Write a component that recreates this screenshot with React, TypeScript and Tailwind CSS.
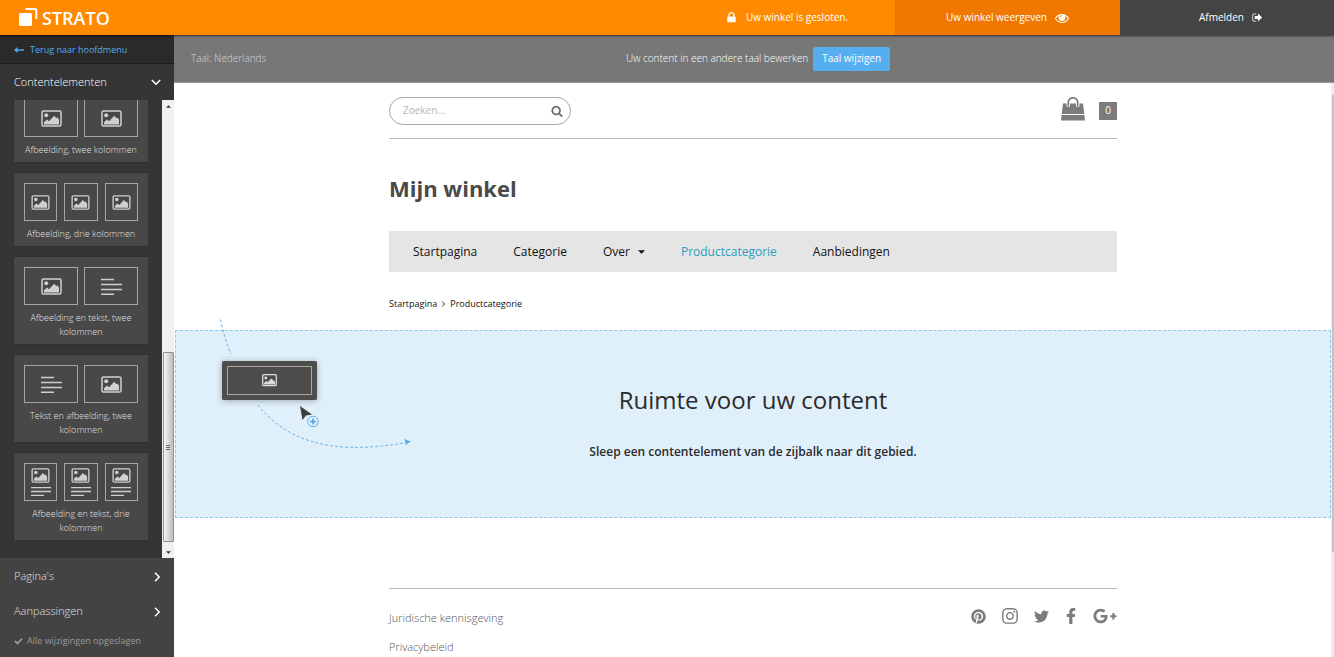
import React from 'react';
import { FaFacebookF, FaGooglePlusG, FaInstagram, FaPinterest, FaTwitter } from 'react-icons/fa';

type Block = 'image' | 'text' | 'imageText';

const elements: { label: string; blocks: Block[] }[] = [
  { label: 'Afbeelding, twee kolommen', blocks: ['image', 'image'] },
  { label: 'Afbeelding, drie kolommen', blocks: ['image', 'image', 'image'] },
  { label: 'Afbeelding en tekst, twee kolommen', blocks: ['image', 'text'] },
  { label: 'Tekst en afbeelding, twee kolommen', blocks: ['text', 'image'] },
  { label: 'Afbeelding en tekst, drie kolommen', blocks: ['imageText', 'imageText', 'imageText'] },
];

const socials = [
  { name: 'Pinterest', Icon: FaPinterest, className: 'size-[15px]' },
  { name: 'Instagram', Icon: FaInstagram, className: 'size-[18px]' },
  { name: 'Twitter', Icon: FaTwitter, className: 'size-[15px]' },
  { name: 'Facebook', Icon: FaFacebookF, className: 'h-4 w-[14px]' },
  { name: 'Google Plus', Icon: FaGooglePlusG, className: 'size-6' },
];

const LOCK =
  'M640 768h512v-192q0-106-75-181t-181-75-181 75-75 181v192zm832 96v576q0 40-28 68t-68 28h-960q-40 0-68-28t-28-68v-576q0-40 28-68t68-28h32v-192q0-184 132-316t316-132 316 132 132 316v192h32q40 0 68 28t28 68z';
const EYE =
  'M1664 960q-152-236-381-353 61 104 61 225 0 185-131.5 316.5t-316.5 131.5-316.5-131.5-131.5-316.5q0-121 61-225-229 117-381 353 133 205 333.5 326.5t434.5 121.5 434.5-121.5 333.5-326.5zm-720-384q0-20-14-34t-34-14q-125 0-214.5 89.5t-89.5 214.5q0 20 14 34t34 14 34-14 14-34q0-86 61-147t147-61q20 0 34-14t14-34zm848 384q0 34-20 69-140 230-376.5 368.5t-499.5 138.5-499.5-139-376.5-368q-20-35-20-69t20-69q140-229 376.5-368t499.5-139 499.5 139 376.5 368q20 35 20 69z';
const SIGN_OUT =
  'M704 1440q0 4 1 20t.5 26.5-3 23.5-10 19.5-20.5 6.5h-320q-119 0-203.5-84.5t-84.5-203.5v-704q0-119 84.5-203.5t203.5-84.5h320q13 0 22.5 9.5t9.5 22.5q0 4 1 20t.5 26.5-3 23.5-10 19.5-20.5 6.5h-320q-66 0-113 47t-47 113v704q0 66 47 113t113 47h312l11.5 1 11.5 3 8 5.5 7 9 2 13.5zm928-544q0 26-19 45l-544 544q-19 19-45 19t-45-19-19-45v-288h-448q-26 0-45-19t-19-45v-384q0-26 19-45t45-19h448v-288q0-26 19-45t45-19 45 19l544 544q19 19 19 45z';
const SEARCH =
  'M1216 832q0-185-131.5-316.5t-316.5-131.5-316.5 131.5-131.5 316.5 131.5 316.5 316.5 131.5 316.5-131.5 131.5-316.5zm512 832q0 52-38 90t-90 38q-54 0-90-38l-343-342q-179 124-399 124-143 0-273.5-55.5t-225-150-150-225-55.5-273.5 55.5-273.5 150-225 225-150 273.5-55.5 273.5 55.5 225 150 150 225 55.5 273.5q0 220-124 399l343 343q37 37 37 90z';

function Glyph({ d, className }: { d: string; className: string }) {
  return (
    <svg viewBox="0 0 1792 1792" className={className} fill="currentColor" aria-hidden="true">
      <path d={d} />
    </svg>
  );
}

function ImageIcon({ className }: { className: string }) {
  return (
    <svg viewBox="0 0 21 17" className={className} aria-hidden="true">
      <rect x="1" y="1" width="19" height="15" rx="1.5" fill="none" stroke="#d0d0d0" strokeWidth="1.5" />
      <circle cx="5.2" cy="5.2" r="2" fill="#d0d0d0" />
      <path d="M3 14.500v-2.300l3-2.600 2 1.600 5.200-5.400 2 2.200 1-.6L18 9.600v4.900z" fill="#d0d0d0" />
    </svg>
  );
}

function TextIcon() {
  return (
    <svg viewBox="0 0 21 17" className="h-[17px] w-[21px]" aria-hidden="true">
      <path d="M0 1.500h13M0 6.500h21M0 11.500h21M0 16.200h13" stroke="#cfcfcf" strokeWidth="1.600" />
    </svg>
  );
}

function BlockPreview({ block, small }: { block: Block; small: boolean }) {
  return (
    <span className="flex h-[38px] flex-1 flex-col items-center justify-center gap-1 border border-[#a6a6a6]">
      {block === 'text' ? <TextIcon /> : <ImageIcon className={small ? 'h-[15px] w-[19px]' : 'h-[17px] w-[21px]'} />}
      {block === 'imageText' && (
        <svg viewBox="0 0 20 9" className="h-[9px] w-5" aria-hidden="true">
          <path d="M0 .7h20M0 4.500h20M0 8.300h13" stroke="#cfcfcf" strokeWidth="1.300" />
        </svg>
      )}
    </span>
  );
}

function Chevron({ className }: { className: string }) {
  return (
    <svg viewBox="0 0 10 10" className={`size-[10px] ${className}`} fill="none" stroke="currentColor" strokeWidth="1.5" aria-hidden="true">
      <path d="M3 .8 7.200 5 3 9.200" />
    </svg>
  );
}

function Header() {
  return (
    <header className="z-10 flex h-[35px] shrink-0 bg-[#ff8a00] text-[10px] text-white shadow-[0_1px_2px_rgba(0,0,0,0.6)]">
      <a href="#" className="flex items-center gap-1 pl-[18px]">
        <svg viewBox="0 0 20 20" className="mb-[2px] size-5" aria-hidden="true">
          <rect x="1" y="6" width="13" height="13" rx="1.5" fill="#fff" />
          <path d="M7.500 2h9a1.800 1.800 0 0 1 1.800 1.800V12" fill="none" stroke="#fff" strokeWidth="2" />
        </svg>
        <span className="text-[18px] leading-5 font-semibold">STRATO</span>
      </a>
      <div className="ml-auto flex w-[217px] items-center justify-center gap-2">
        <Glyph d={LOCK} className="size-[13px]" />
        <span>Uw winkel is gesloten.</span>
      </div>
      <a href="#" className="flex w-[225px] items-center justify-center gap-2 bg-[#f07800]">
        Uw winkel weergeven
        <Glyph d={EYE} className="size-[14px]" />
      </a>
      <a href="#" className="flex w-[214px] items-center justify-center gap-2 bg-[#444] pl-2">
        Afmelden
        <Glyph d={SIGN_OUT} className="size-[11px]" />
      </a>
    </header>
  );
}

function Sidebar() {
  return (
    <aside className="flex w-[174px] shrink-0 flex-col bg-[#353535] font-light text-[#e0e0e0]">
      <a href="#" className="flex h-[29px] shrink-0 items-center gap-[6px] border-b border-[#1c1c1c] bg-[#2a2a2a] pt-[2px] pl-[14px] text-[9px] font-normal text-[#51aced]">
        <svg viewBox="0 0 10 6" className="h-[6px] w-[10px]" aria-hidden="true">
          <path d="M3.500 0v2.200H10v1.600H3.500V6L0 3z" fill="currentColor" />
        </svg>
        Terug naar hoofdmenu
      </a>
      <button type="button" className="flex h-9 shrink-0 items-center justify-between pr-[13px] pl-[14px] text-[11px] text-white">
        Contentelementen
        <Chevron className="rotate-90" />
      </button>
      <div className="flex min-h-0 flex-1 justify-between">
        <ul className="flex flex-col justify-end gap-[11px] overflow-hidden pb-[18px] pl-[14px]">
          {elements.map((el) => (
            <li key={el.label} className="w-[134px] shrink-0 rounded-[1px] bg-[#484848] px-[9px] pt-[10px] pb-[5px] shadow-[0_0_2px_rgba(0,0,0,0.3)]">
              <div className={el.blocks.length === 3 ? 'flex gap-[7px] px-px' : 'flex gap-[6px] px-px'}>
                {el.blocks.map((block, i) => (
                  <BlockPreview key={i} block={block} small={el.blocks.length === 3} />
                ))}
              </div>
              <p className="mt-[6px] text-center text-[9px] leading-[14px]">{el.label}</p>
            </li>
          ))}
        </ul>
        <div className="flex w-3 flex-col items-center bg-[#f0f0f0] pt-[5px] pb-1">
          <svg viewBox="0 0 6 3" className="h-[3px] w-[5px]"><path d="M0 3 3 0l3 3z" fill="#333" /></svg>
          <div className="flex-1" />
          <div className="flex h-[190px] w-[11px] flex-col items-center justify-center gap-px rounded-[1px] border border-[#8f8f8f] bg-linear-to-r from-[#f5f5f5] to-[#bdbdbd]">
            <span className="h-px w-1 bg-[#666]" />
            <span className="h-px w-1 bg-[#666]" />
            <span className="h-px w-1 bg-[#666]" />
          </div>
          <svg viewBox="0 0 6 3" className="mt-[9px] h-[3px] w-[5px]"><path d="M0 0l3 3 3-3z" fill="#333" /></svg>
        </div>
      </div>
      <nav className="shrink-0 bg-[#434343] pt-px pb-1 text-[11px]">
        {['Pagina\'s', 'Aanpassingen'].map((item) => (
          <button key={item} type="button" className="flex h-[35px] w-full items-center justify-between pr-[12px] pl-[14px]">
            {item}
            <Chevron className="text-white" />
          </button>
        ))}
        <p className="flex h-6 items-center gap-1 pl-[14px] text-[9px] font-medium text-[#9a9a9a]">
          <svg viewBox="0 0 10 8" className="h-2 w-[9px]" aria-hidden="true">
            <path d="M1 4l2.800 2.800L9 1.400" fill="none" stroke="currentColor" strokeWidth="2" />
          </svg>
          Alle wijzigingen opgeslagen
        </p>
      </nav>
    </aside>
  );
}

// Shows how a content element is dragged into the drop zone
function DragHint() {
  return (
    <svg viewBox="0 0 200 135" className="absolute -top-[13px] left-[39px] h-[135px] w-[200px] overflow-visible" aria-hidden="true">
      <g fill="none" stroke="#6fb4ea" strokeDasharray="3 2">
        <path d="M5.500 1.500C8 13 11 25 16 36" />
        <path d="M43 87C70 121 112 138 189 125" />
      </g>
      <path d="M196 123.500l-7-2.500 1.500 3-.5 3z" fill="#5aaae8" />
      <rect x="7" y="43" width="95" height="39" rx="1.500" fill="#4d4d4b" className="drop-shadow-[0_1px_3px_rgba(0,0,0,0.3)]" />
      <rect x="12.500" y="48.500" width="84" height="28" fill="none" stroke="#a8a8a8" />
      <rect x="47.700" y="56.700" width="13.600" height="11" rx="1" fill="none" stroke="#dcdcdc" strokeWidth="1.300" />
      <circle cx="50.800" cy="60" r="1.400" fill="#dcdcdc" />
      <path d="M49 66.500v-1.500l2.500-2 1.500 1 3.300-3.600 3.700 3.300v2.800z" fill="#dcdcdc" />
      <path d="M85 88l12 8.500-6 1-3.500 4.500z" fill="#3e3e3e" />
      <circle cx="98" cy="103.500" r="5.300" fill="#e1f0fb" stroke="#62aeea" />
      <path d="M98 100.500v6M95 103.500h6" stroke="#4da2e6" strokeWidth="1.500" />
    </svg>
  );
}

function Shop() {
  return (
    <div className="min-w-0 flex-1 overflow-hidden">
      <div className="mx-auto max-w-[728px]">
        <div className="flex h-14 items-center justify-between border-b border-[#b8b8b8]">
          <form className="flex h-7 w-[182px] items-center rounded-full border border-[#a8a8a8] pr-[7px] pl-[13px]">
            <input type="search" aria-label="Zoeken" placeholder="Zoeken..." className="min-w-0 flex-1 text-[10px] outline-none placeholder:text-[#b5b5b5]" />
            <button type="submit" aria-label="Zoek" className="text-[#6b6b6b]">
              <Glyph d={SEARCH} className="size-[12px]" />
            </button>
          </form>
          <a href="#" aria-label="Winkelmandje" className="flex items-center gap-[14px]">
            <svg viewBox="0 0 24 24" className="mb-1 size-6" aria-hidden="true">
              <path d="M2 6.500h20l1.300 10.500H.7z M.6 18h22.800l.6 5.500H0z" fill="#7b7b7b" />
              <path d="M7.300 9.500V5.500a4.700 4.700 0 0 1 9.400 0v4" fill="none" stroke="#fff" strokeWidth="3.600" />
              <path d="M7.300 9V5.500a4.700 4.700 0 0 1 9.400 0V9" fill="none" stroke="#7b7b7b" strokeWidth="1.700" />
            </svg>
            <span className="flex size-[18px] items-center justify-center bg-[#7b7b7b] text-[10px] text-white">0</span>
          </a>
        </div>
        <h1 className="mt-[33px] text-[22px] leading-8 font-bold text-[#4a4a4a]">Mijn winkel</h1>
        <nav className="mt-[27px] flex h-[41px] items-center gap-9 bg-[#e5e5e5] px-6 text-[12px] text-[#111]">
          <a href="#">Startpagina</a>
          <a href="#">Categorie</a>
          <a href="#" className="flex items-center gap-2">
            Over
            <svg viewBox="0 0 8 4" className="h-1 w-[7px]" aria-hidden="true"><path d="M0 0h8L4 4z" fill="currentColor" /></svg>
          </a>
          <a href="#" className="text-[#2b9dbf]">Productcategorie</a>
          <a href="#">Aanbiedingen</a>
        </nav>
        <div className="mt-6 mb-[18px] flex h-4 items-center gap-1 text-[9px] text-[#111]">
          <a href="#">Startpagina</a>
          <svg viewBox="0 0 5 7" className="h-[6px] w-[5px]" fill="none" stroke="currentColor" aria-hidden="true"><path d="M1 .8 3.700 3.500 1 6.200" /></svg>
          <span>Productcategorie</span>
        </div>
      </div>
      <section className="relative flex h-[188px] flex-col items-center border border-dashed border-[#8cc8f0] bg-[#e0f0fb] pt-[53px] text-[#2b2b2b]">
        <DragHint />
        <h2 className="text-[24px] leading-8">Ruimte voor uw content</h2>
        <p className="mt-[26px] text-[12px] leading-5 font-semibold">Sleep een contentelement van de zijbalk naar dit gebied.</p>
      </section>
      <footer className="mx-auto mt-[70px] flex max-w-[728px] items-start justify-between border-t border-[#b8b8b8] pt-[18px] text-[#7b7b7b]">
        <div className="flex flex-col gap-[9px] pt-px text-[11px] leading-5 font-light text-[#555]">
          <a href="#">Juridische kennisgeving</a>
          <a href="#">Privacybeleid</a>
        </div>
        <div className="flex h-[18px] items-center gap-[15px]">
          {socials.map(({ name, Icon, className }) => (
            <a key={name} href="#" aria-label={name}>
              <Icon className={className} />
            </a>
          ))}
        </div>
      </footer>
    </div>
  );
}

export default function App() {
  return (
    <div className="flex h-screen flex-col overflow-hidden bg-white font-['Open_Sans',sans-serif]">
      <Header />
      <div className="flex min-h-0 flex-1">
        <Sidebar />
        <main className="flex min-w-0 flex-1 flex-col">
          <div className="flex h-12 shrink-0 items-center border-b border-[#999] bg-[#777] px-[17px] text-[10px] text-white">
            <span className="flex-1 font-light text-[#d4d4d4]">Taal: Nederlands</span>
            <div className="flex items-center gap-[5px] pl-2 font-light">
              Uw content in een andere taal bewerken
              <button type="button" className="h-6 rounded-[2px] bg-[#55aeef] px-[9px] font-normal">Taal wijzigen</button>
            </div>
            <span className="flex-1" />
          </div>
          <div className="flex min-h-0 flex-1 pl-px">
            <Shop />
            <div className="w-[3px] bg-[#ececec] pt-3 pl-px">
              <div className="h-[457px] bg-[#c4c4c4]" />
            </div>
          </div>
        </main>
      </div>
    </div>
  );
}
